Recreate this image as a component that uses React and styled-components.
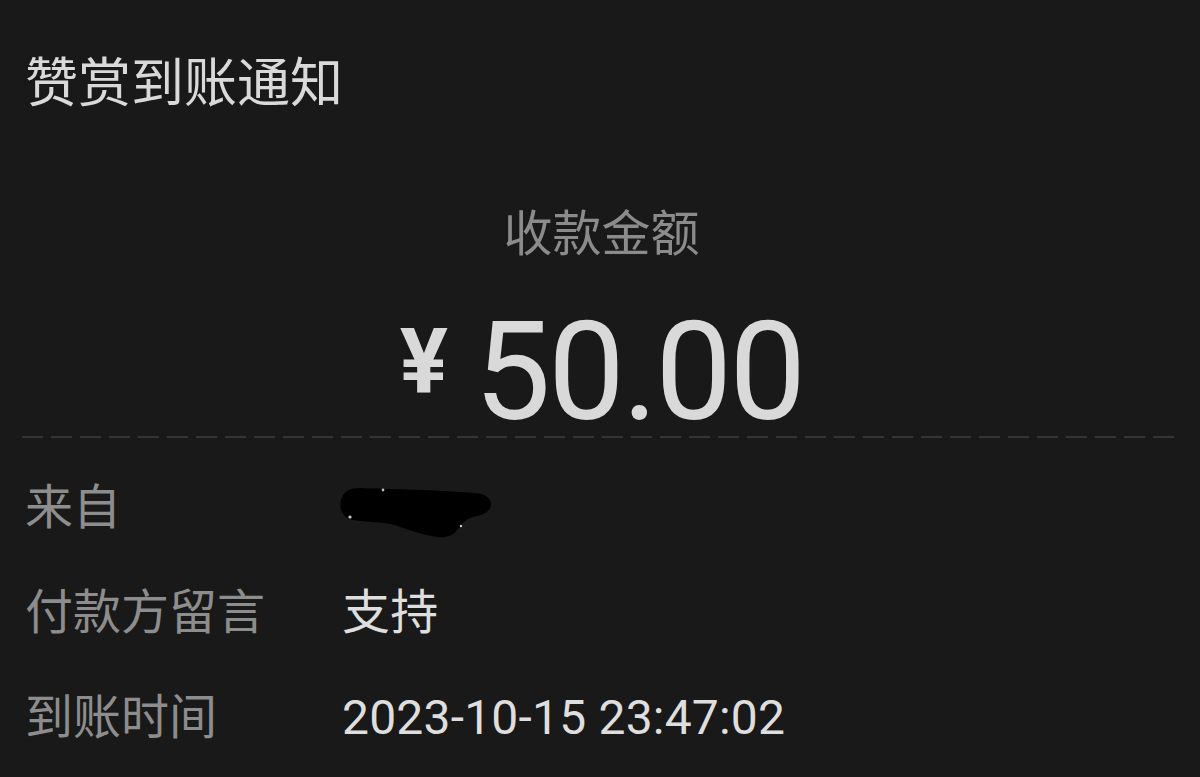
import React from 'react'
import styled, { createGlobalStyle } from 'styled-components'

const GlobalStyle = createGlobalStyle`
  html, body {
    margin: 0;
    padding: 0;
    background: #191919;
  }
  body {
    font-family: Roboto, "Noto Sans CJK SC", sans-serif;
    color: #d8d8d8;
  }
`

const Page = styled.div`
  width: 1200px;
  height: 777px;
  overflow: hidden;
  background: #191919;
  padding: 52px 22px 0 25px;
  box-sizing: border-box;
`

const Title = styled.div`
  font-size: 53px;
  line-height: 64px;
  color: #d9d9d9;
  white-space: nowrap;
`

const AmountBlock = styled.div`
  display: flex;
  flex-direction: column;
  align-items: center;
  margin-top: 89px;
`

const AmountLabel = styled.div`
  font-size: 49px;
  line-height: 60px;
  color: #8b8b8b;
`

const Amount = styled.div`
  margin-top: 38px;
  font-family: Roboto, sans-serif;
  font-size: 137px;
  line-height: 120px;
  color: #d9d9d9;
  letter-spacing: -3px;
  white-space: nowrap;
`

const Yen = styled.span`
  font-size: 90px;
  font-weight: 700;
  vertical-align: 26px;
  letter-spacing: 0;
  margin-right: 26px;
`

const Divider = styled.div`
  height: 2px;
  margin: 4px -2px 0 -3px;
  background: repeating-linear-gradient(to right, #353535 0 21px, transparent 21px 29px);
`

const Details = styled.div`
  display: grid;
  grid-template-columns: 317px 1fr;
  grid-auto-rows: 105px;
  margin-top: 17px;
`

const Label = styled.div`
  font-size: 48px;
  line-height: 105px;
  color: #8d8d8d;
  white-space: nowrap;
`

const Value = styled.div`
  display: flex;
  align-items: center;
  font-size: 48px;
  line-height: 105px;
  color: #dedede;
  letter-spacing: 0.2px;
  white-space: nowrap;
`

const Blot = styled.svg`
  margin-left: -5px;
  margin-top: 14px;
`

const Redacted = () => (
  <Blot width="156" height="62" viewBox="0 0 156 62">
    <path
      d="M4 16 C6 8 12 4 22 4 C50 5 100 6 138 9 C148 10 154 14 154 20 C154 28 146 31 136 33 C128 35 126 40 120 46 C116 52 108 54 100 53 C88 51 74 47 58 41 C42 37 22 38 12 35 C5 32 2 24 4 16 Z"
      fill="#000"
    />
    <circle cx="13" cy="33" r="1.6" fill="#cfcfcf" />
    <circle cx="46" cy="6" r="1.4" fill="#bdbdbd" />
    <circle cx="124" cy="42" r="1.2" fill="#cfcfcf" />
  </Blot>
)

const rows = [
  { label: '来自', value: <Redacted /> },
  { label: '付款方留言', value: '支持' },
  { label: '到账时间', value: '2023-10-15 23:47:02' },
]

export default function App() {
  return (
    <Page>
      <GlobalStyle />
      <Title>赞赏到账通知</Title>
      <AmountBlock>
        <AmountLabel>收款金额</AmountLabel>
        <Amount>
          <Yen>¥</Yen>50.00
        </Amount>
      </AmountBlock>
      <Divider />
      <Details>
        {rows.map(r => (
          <React.Fragment key={r.label}>
            <Label>{r.label}</Label>
            <Value>{r.value}</Value>
          </React.Fragment>
        ))}
      </Details>
    </Page>
  )
}
